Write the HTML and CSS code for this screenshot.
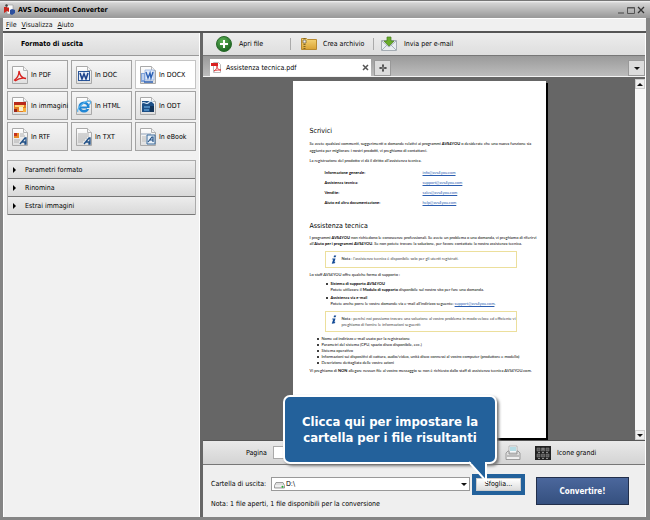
FILE: index.html
```html
<!DOCTYPE html>
<html lang="it">
<head>
<meta charset="utf-8">
<title>AVS Document Converter</title>
<link rel="stylesheet" href="styles.css">
</head>
<body>
<svg class="defs" aria-hidden="true">
  <defs>
    <linearGradient id="paper" x1="0" y1="0" x2="0" y2="1"><stop offset="0" stop-color="#fff"/><stop offset="1" stop-color="#dedede"/></linearGradient>
    <linearGradient id="gold" x1="0" y1="0" x2="0" y2="1"><stop offset="0" stop-color="#f6d678"/><stop offset="1" stop-color="#d9a233"/></linearGradient>
    <radialGradient id="green" cx=".4" cy=".3" r=".8"><stop offset="0" stop-color="#5fb457"/><stop offset="1" stop-color="#12591a"/></radialGradient>
    <symbol id="sheet" viewBox="0 0 16 18"><path d="M.5.5h11l4 4v13H.5z" fill="url(#paper)" stroke="#a9a9a9"/><path d="M11.500.5v4h4" fill="#f4f4f4" stroke="#b5b5b5"/></symbol>
  </defs>
</svg>
<div class="window">
  <header class="titlebar">
    <svg class="logo" viewBox="0 0 11 11"><path d="M3 1h6v9H3z" fill="#f8f8f8" stroke="#999" stroke-width=".6"/><path d="M0 3h3l1 1 1-1v5L3 7 0 9z" fill="#c9251c"/><path d="M1 1l2-1 1 2-2 1z" fill="#444"/><path d="M6 6l2-1 3 1v3l-3 2-2-1z" fill="#2b4f9e"/></svg>
    <h1>AVS Document Converter</h1>
    <div class="window-buttons">
      <button aria-label="Riduci"><svg viewBox="0 0 8 8"><path d="M1 7h6" stroke="#444" stroke-width="1"/></svg></button>
      <button aria-label="Ingrandisci"><svg viewBox="0 0 8 8"><path d="M.5 1.500h7v6h-7zM.5 2h7" fill="none" stroke="#555"/></svg></button>
      <button aria-label="Chiudi"><svg viewBox="0 0 8 8"><path d="M1 1l6 6M7 1L1 7" stroke="#333" stroke-width="1.300"/></svg></button>
    </div>
  </header>
  <nav class="menubar">
    <a href="#"><u>F</u>ile</a><a href="#"><u>V</u>isualizza</a><a href="#"><u>A</u>iuto</a>
  </nav>
  <div class="body">
    <aside class="sidebar">
      <h2>Formato di uscita</h2>
      <div class="formats">
        <button><svg viewBox="0 0 16 18"><use href="#sheet"/><path d="M2 14.500c3-2 5-5.500 5-9.500 1 5 4 7.500 7 7.500-4-.8-8 .2-11 2.500" fill="none" stroke="#d8201d" stroke-width="1.300"/></svg>In PDF</button>
        <button><svg viewBox="0 0 16 18"><use href="#sheet"/><path d="M2 5h12v10H2z" fill="#2a5699"/><path d="M3 14V6h10v8z" fill="#e6edf8"/><path d="M4 7l2 6 2-5 2 5 2-6" fill="none" stroke="#1d438c" stroke-width="1.600"/></svg>In DOC</button>
        <button class="selected"><svg viewBox="0 0 16 18"><use href="#sheet"/><path d="M1 7h4v9H1z" fill="#7fa3dc"/><path d="M2 9h2M2 11h2M2 13h2" stroke="#fff"/><path d="M5 4h9v10H5z" fill="#e2ebfa" stroke="#89a9dc" stroke-width=".7"/><path d="M6 6l2 6 2-5 1 5 2-6M4 16h9" fill="none" stroke="#2e62b5" stroke-width="1.400"/></svg>In DOCX</button>
        <button><svg viewBox="0 0 16 18"><use href="#sheet"/><path d="M2 5h12v10H2z" fill="#e27a22"/><path d="M2 5h12v3H2z" fill="#b8281a"/><path d="M3 8h9v2H3z" fill="#ffd977"/><path d="M7 10h4v4H7z" fill="#f9efcf"/><path d="M2 12h3v3H2z" fill="#9d2418"/><path d="M11 11h3v4h-3z" fill="#f5b13c"/></svg>In immagini</button>
        <button><svg viewBox="0 0 16 18"><use href="#sheet"/><circle cx="8" cy="10" r="4.300" fill="none" stroke="#2086d4" stroke-width="2.600"/><path d="M5 10.500h8" stroke="#2086d4" stroke-width="2"/><path d="M11 12h4v-1h-4z" fill="#eee"/><path d="M2 15C0 12 9 3 14 4c1 1 0 3-1 4" fill="none" stroke="#56b3ee" stroke-width="1.200"/></svg>In HTML</button>
        <button><svg viewBox="0 0 16 18"><use href="#sheet"/><path d="M2 4h9l3 3v8H2z" fill="#1d4f86"/><path d="M2 6c3-2 4 2 6 0s4-2 5-1" fill="none" stroke="#cfe2f4" stroke-width="1.200"/><path d="M4 10h8M4 13h5" stroke="#5b9bd0" stroke-width="1.300"/><path d="M10 9h4v6h-4z" fill="#123459"/></svg>In ODT</button>
        <button><svg viewBox="0 0 16 18"><use href="#sheet"/><path d="M2 5h5v5H2z" fill="#e88a2a"/><path d="M2 5h3v3H2z" fill="#c5321f"/><path d="M8 6h4M8 8h5M2 12h6M2 14h5" stroke="#b0b0b0"/><path d="M8 16l5-6h1v6h-1v-2h-3" fill="none" stroke="#1f4f86" stroke-width="1.300"/></svg>In RTF</button>
        <button><svg viewBox="0 0 16 18"><use href="#sheet"/><path d="M2 6h11M2 8h11M2 10h9M2 12h7M2 14h5" stroke="#b0b0b0"/><path d="M8 16l5-6h1v6h-1v-2h-3" fill="none" stroke="#1f4f86" stroke-width="1.300"/></svg>In TXT</button>
        <button><svg viewBox="0 0 16 18"><use href="#sheet"/><path d="M1 5h10v2H1z" fill="#c3ccd8"/><path d="M2 9h4M2 11h4M2 13h4" stroke="#bbb"/><path d="M7 7h8v9H7z" fill="#e8f0f8" stroke="#3b6a9b"/><path d="M8 14l4-5h1v5m-3-2h3" fill="none" stroke="#1f4f86" stroke-width="1.200"/></svg>In eBook</button>
      </div>
      <div class="accordion">
        <button>Parametri formato</button>
        <button>Rinomina</button>
        <button>Estrai immagini</button>
      </div>
    </aside>
    <main class="workspace">
      <div class="toolbar">
        <button class="open"><svg viewBox="0 0 16 16"><circle cx="8" cy="8" r="7.500" fill="url(#green)" stroke="#2c6b2c"/><path d="M8 4v8M4 8h8" stroke="#fff" stroke-width="2"/></svg>Apri file</button>
        <button class="archive"><svg viewBox="0 0 16 16"><path d="M.5 2.500h5l1 1h9v10h-15z" fill="url(#gold)" stroke="#b98a2e"/><path d="M3.500 2v12" stroke="#7d6425" stroke-width="2" stroke-dasharray="1 1"/><path d="M2 4h3v3H2z" fill="#eee" stroke="#6b5a30" stroke-width=".7"/></svg>Crea archivio</button>
        <button class="mail"><svg viewBox="0 0 16 16"><path d="M.5 4.500h15v10H.5z" fill="#e9edf0" stroke="#a4acb3"/><path d="M1 5l7 6 7-6M1 14l5-5M15 14l-5-5" fill="none" stroke="#a4b0bb"/><path d="M6 1h4v4h3l-5 5-5-5h3z" fill="#69ad2c" stroke="#467f1b" stroke-width=".7"/></svg>Invia per e-mail</button>
      </div>
      <div class="tabs">
        <div class="tab">
          <svg viewBox="0 0 11 11"><path d="M2.500.5h5l2 2v8h-7z" fill="#fff" stroke="#bbb"/><path d="M0 1h7v3H0z" fill="#d92020"/><path d="M3 9c2-1 3-3 3-5 0 3 2 4 4 4-3 0-5 0-7 1" fill="none" stroke="#d92020" stroke-width=".8"/></svg>
          <span>Assistenza tecnica.pdf</span>
          <button aria-label="Chiudi scheda"><svg viewBox="0 0 7 7"><path d="M1 1l5 5M6 1L1 6" stroke="#555" stroke-width="1.500"/></svg></button>
        </div>
        <button class="new-tab" aria-label="Nuova scheda"><svg viewBox="0 0 8 8"><path d="M4 .5v7M.5 4h7" stroke="#444" stroke-width="2"/><path d="M4 1.500v5M1.500 4h5" stroke="#bbb" stroke-width=".6"/></svg></button>
        <button class="tab-menu" aria-label="Elenco schede"><i class="arrow down"></i></button>
      </div>
      <div class="viewer">
        <div class="canvas">
          <article class="page">
            <h3>Scrivici</h3>
            <p class="loose">Se avete qualsiasi commenti, suggerimenti o domande relativi ai programmi <b>AVS4YOU</b> o desiderate che una nuova funzione sia<br>aggiunta per migliorare i nostri prodotti, vi preghiamo di contattarci.</p>
            <p class="loose">La registrazione del prodotto vi dà il diritto all'assistenza tecnica.</p>
            <table>
              <tr><th>Informazione generale:</th><td><a href="#">info@avs4you.com</a></td></tr>
              <tr><th>Assistenza tecnica:</th><td><a href="#">support@avs4you.com</a></td></tr>
              <tr><th>Vendite:</th><td><a href="#">sales@avs4you.com</a></td></tr>
              <tr><th>Aiuto ed altra documentazione:</th><td><a href="#">help@avs4you.com</a></td></tr>
            </table>
            <h3 class="second">Assistenza tecnica</h3>
            <p>I programmi <b>AVS4YOU</b> non richiedono le conoscenze professionali. Se avete un problema o una domanda, vi preghiamo di riferirvi<br>all'<b>Aiuto per i programmi AVS4YOU</b>. Se non potete trovare la soluzione, per favore contattate la nostra assistenza tecnica.</p>
            <div class="note"><svg viewBox="0 0 8 11"><path d="M4 0h3L6 2.500H3.500zM2 4h4L4.500 9 6 8.500 5 10.500 1 11l2-6-2 .5z" fill="#124a96"/></svg><p><b>Nota</b> : l'assistenza tecnica è disponibile solo per gli utenti registrati.</p></div>
            <p>Lo staff AVS4YOU offre qualche forma di supporto :</p>
            <ul class="support">
              <li><b>Sistema di supporto AVS4YOU</b><br>Potete utilizzare il <b>Modulo di supporto</b> disponibile sul nostro sito per fare una domanda.</li>
              <li><b>Assistenza via e-mail</b><br>Potete anche porre le vostre domande via e-mail all'indirizzo seguente: <a href="#">support@avs4you.com</a>.</li>
            </ul>
            <div class="note"><svg viewBox="0 0 8 11"><path d="M4 0h3L6 2.500H3.500zM2 4h4L4.500 9 6 8.500 5 10.500 1 11l2-6-2 .5z" fill="#124a96"/></svg><p><b>Nota</b> : perché noi possiamo trovare una soluzione al vostro problema in modo veloce ed efficiente vi<br>preghiamo di fornire le informazioni seguenti:</p></div>
            <ul class="details">
              <li>Nome ed indirizzo e-mail usato per la registrazione</li>
              <li>Parametri del sistema (CPU, spazio disco disponibile, ecc.)</li>
              <li>Sistema operativo</li>
              <li>Informazioni sui dispositivi di cattura, audio/video, unità disco connessi al vostro computer (produttore e modello)</li>
              <li>Descrizione dettagliata delle vostre azioni</li>
            </ul>
            <p>Vi preghiamo di <b>NON</b> allegare nessun file al vostro messaggio se non è richiesto dallo staff di assistenza tecnica AVS4YOU.com.</p>
          </article>
        </div>
        <div class="scrollbar"><button aria-label="Su"><i class="arrow up"></i></button><button aria-label="Giù"><i class="arrow down"></i></button></div>
      </div>
      <div class="pagebar">
        <label for="pagina">Pagina</label><input id="pagina" type="text">
        <button class="print" aria-label="Stampa"><svg viewBox="0 0 16 16"><path d="M4 1h8v7H4z" fill="#f4f8fa" stroke="#aaa" stroke-width=".8"/><path d="M5 2h6v4H5z" fill="#b5dce4"/><path d="M1 8l2-2h1v3h8V6h1l2 2v6.500H1z" fill="#dedede" stroke="#8d8d8d" stroke-width=".8"/><path d="M2 11h12" stroke="#999"/><path d="M2 13h12" stroke="#fff"/></svg></button>
        <button class="icons"><svg viewBox="0 0 16 14"><path d="M0 0h16v14H0z" fill="#222"/><path d="M2 2h3v3H2zM6.500 2h3v3h-3zM11 2h3v3h-3zM2 8h3v3H2zM6.500 8h3v3h-3zM11 8h3v3h-3z" fill="#555" stroke="#888" stroke-width=".5"/><path d="M7 3h2M3 6.500h2M7 6.500h2M11 6.500h2M3 12.500h2M7 12.500h2M11 12.500h2" stroke="#aaa" stroke-width=".8"/></svg>Icone grandi</button>
      </div>
      <footer class="output">
        <div class="fields">
          <div class="row">
            <label for="cartella">Cartella di uscita:</label>
            <span class="combo"><select id="cartella"><option>D:\</option></select><svg class="drive" viewBox="0 0 11 7"><path d="M2 .5h7l1.500 3v2.500h-10V3.500z" fill="#ddd" stroke="#888" stroke-width=".8"/><path d="M1 4h9" stroke="#fff"/><circle cx="8.500" cy="4.700" r="1" fill="#22aa2c"/></svg><i class="arrow down"></i></span>
            <span class="highlight"><button class="browse">Sfoglia...</button>
              <span class="callout" role="tooltip">Clicca qui per impostare la cartella per i file risultanti<svg viewBox="0 0 22 22"><path d="M1 2l17 18V2z" fill="#23619b"/><path d="M1 1l17 19V1" fill="none" stroke="#fff" stroke-width="2"/><path d="M2 0h15v3H4z" fill="#23619b"/></svg></span>
            </span>
          </div>
          <p>Nota: 1 file aperti, 1 file disponibili per la conversione</p>
        </div>
        <button class="convert">Convertire!</button>
      </footer>
    </main>
  </div>
</div>
</body>
</html>
```
FILE: styles.css
```css
* { box-sizing: border-box; }
body {
  margin: 0;
  font: 7px/10px "DejaVu Sans Condensed", "DejaVu Sans", sans-serif;
  color: #000;
}
h1, h2, h3, p, ul { margin: 0; padding: 0; }
svg { display: block; flex: none; }
button {
  margin: 0; padding: 0; border: 0; background: none;
  font: inherit; color: inherit; white-space: nowrap;
}
.defs { position: absolute; width: 0; height: 0; }

.window {
  min-height: 100vh;
  display: flex; flex-direction: column;
  padding: 0 4px 3px 3px;
  background: #858585;
  border-top: 1px solid #777;
}
.titlebar {
  display: flex; align-items: center; gap: 3px;
  height: 17px; margin: 0 -4px 0 -3px; padding: 0 5px 0 4px;
  background: linear-gradient(#f4f4f4 0, #d3d3d3 2px, #9b9b9b 16px);
}
.logo { width: 11px; height: 11px; }
.titlebar h1 { flex: 1; font-size: 7px; }
.window-buttons { display: flex; gap: 2px; }
.window-buttons svg { width: 8px; height: 8px; }
.menubar {
  display: flex; gap: 5px; align-items: center;
  height: 13px; padding-left: 3px;
  background: #f0f0f0; border-top: 1px solid #fff;
}
.menubar a { color: #111; text-decoration: none; }
.body {
  flex: 1; display: grid; grid-template-columns: 197px 1fr; gap: 3px;
  border-top: 2px solid #555; background: #666;
}

.sidebar { background: #f1f1f1; border: solid #fff; border-width: 0 1px; }
.sidebar h2 {
  height: 23px; padding-left: 17px; line-height: 22px; font-size: 7px;
  background: linear-gradient(#ededed, #dcdcdc); border-bottom: 1px solid #999;
}
.formats {
  display: grid; grid-template-columns: repeat(3, minmax(0, 1fr)); gap: 2px 3px;
  padding: 4px 3px 0;
}
.formats button {
  display: flex; align-items: center; gap: 3px;
  height: 29px; padding-left: 4px;
  border: 1px solid #a3a3a3; background: linear-gradient(#f5f5f5, #e2e2e2);
}
.formats .selected { background: #fff; border-color: #c4c4c4; }
.formats svg { width: 16px; height: 18px; }
.accordion { margin: 9px 3px 0; border: 1px solid #aaa; border-bottom: 0; }
.accordion button {
  display: flex; align-items: center; width: 100%; height: 18px; padding-left: 5px;
  background: linear-gradient(#ededed, #d9d9d9); border-bottom: 1px solid #777;
}
.accordion button::before {
  content: ""; margin-right: 9px;
  border: 3px solid transparent; border-left: 3px solid #000; border-right: 0;
}

.workspace { display: flex; flex-direction: column; min-width: 0; background: #efefef; border-right: 1px solid #fff; }
.toolbar {
  display: flex; align-items: center; height: 23px; padding-left: 13px;
  background: linear-gradient(#ededed, #dedede); border-bottom: 1px solid #777;
}
.toolbar button { display: flex; align-items: center; gap: 7px; height: 12px; }
.toolbar svg { width: 16px; height: 16px; }
.toolbar .open { width: 74px; }
.toolbar .archive { width: 83px; padding-left: 10px; gap: 6px; border-left: 1px solid #aaa; }
.toolbar .mail { padding-left: 7px; border-left: 1px solid #aaa; }

.tabs {
  display: flex; align-items: flex-end; gap: 3px; height: 21px; padding-left: 7px;
  background: linear-gradient(#9a9a9a, #bdbdbd); border-bottom: 1px solid #f3f3f3;
}
.tab { display: flex; align-items: center; width: 161px; height: 17px; padding: 0 2px 0 1px; gap: 4px; background: #fff; }
.tab > svg { width: 11px; height: 11px; }
.tab span { flex: 1; }
.tab button svg { width: 7px; height: 7px; }
.new-tab, .tab-menu { width: 17px; height: 16px; border: 1px solid #999; background: #dcdcdc; display: flex; align-items: center; justify-content: center; }
.new-tab svg { width: 8px; height: 8px; }
.tab-menu { margin-left: auto; }
.arrow { width: 0; height: 0; border: 3px solid transparent; }
.arrow.down { border-top-color: #111; border-bottom: 0; }
.arrow.up { border-bottom-color: #111; border-top: 0; }

.viewer { flex: 1; display: flex; border-top: 2px solid #666; }
.canvas {
  flex: 1; display: flex; justify-content: center; padding: 2px 0;
  background: #666;
}
.scrollbar { display: flex; flex-direction: column; justify-content: space-between; width: 10px; background: #f8f8f8; }
.scrollbar button { display: flex; align-items: center; justify-content: center; height: 10px; border: 1px solid #ccc; background: #eee; }

.page {
  width: 253px; padding: 45px 0 0 17px; overflow: hidden;
  background: #fff; box-shadow: 2px 2px #000;
  font: 4px/6px Lato, Roboto, sans-serif; white-space: nowrap;
}
.page h3 {
  margin-bottom: 4px;
  font: 7px/10px "DejaVu Sans Condensed", "DejaVu Sans", sans-serif;
}
.page .second { margin-top: 13px; }
.page .loose { line-height: 7px; margin-bottom: 3px; }
.page table { border-collapse: collapse; margin: 4px 0 0 15px; }
.page th, .page td { height: 10px; padding: 0; text-align: left; line-height: 6px; }
.page th { width: 98px; }
.page a { color: #2a5db0; }
.note {
  display: flex; align-items: flex-start; gap: 5px;
  width: 192px; margin: 4px 0 4px 15px; padding: 3px 5px;
  border: 1px solid #ecdf9c; color: #444;
  font-family: "Liberation Sans Narrow", Lato, sans-serif;
}
.note svg { width: 6px; height: 9px; }
.note p { padding-top: 1px; }
.support { margin: 3px 0 0 21px; }
.support li + li { margin-top: 2px; }
.page li { display: block; position: relative; }
.page li::before {
  content: ""; position: absolute; left: -5px; top: 2px;
  width: 2px; height: 2px; border-radius: 1px; background: #000;
}
.details { margin: 3px 0 2px 12px; }

.pagebar {
  display: flex; align-items: center; height: 25px; padding-left: 43px;
  background: linear-gradient(#e9e9e9, #d4d4d4); border-top: 1px solid #555; border-bottom: 1px solid #777;
}
.pagebar label { width: 27px; }
.pagebar input { width: 40px; height: 13px; border: 1px solid #aaa; font: inherit; }
.pagebar svg { width: 16px; height: 16px; }
.pagebar .print { margin-left: 192px; }
.pagebar .icons { display: flex; align-items: center; gap: 6px; margin-left: 14px; }
.pagebar .icons svg { height: 14px; }

.output { display: flex; align-items: center; gap: 11px; height: 52px; padding: 0 16px 0 8px; }
.fields { flex: 1; display: flex; flex-direction: column; gap: 4px; }
.row { display: flex; align-items: center; }
.row label { width: 60px; white-space: nowrap; }
.combo { flex: 1; position: relative; margin-right: 2px; }
.combo select {
  display: block; width: 100%; height: 14px; padding: 0 0 0 14px;
  appearance: none; border: 1px solid #999; border-radius: 0; background: #fff; font: inherit; color: inherit;
}
.combo .drive { position: absolute; left: 3px; top: 5px; width: 11px; height: 7px; }
.combo .arrow { position: absolute; right: 3px; top: 6px; }
.highlight { position: relative; padding: 4px; background: #23619b; }
.browse { display: block; width: 45px; height: 13px; background: linear-gradient(#fff, #ddd); border: 1px solid #ccc; }
.callout {
  position: absolute; right: 28px; bottom: 31px; width: 214px; height: 69px;
  padding: 17px 0; border: 2px solid #fff; border-radius: 7px;
  background: #23619b; color: #fff; box-shadow: 2px 2px 3px #777;
  font: bold 13px/16px "DejaVu Sans Condensed", "DejaVu Sans", sans-serif; text-align: center;
}
.callout svg { position: absolute; right: 5px; bottom: -21px; width: 22px; height: 22px; }
.convert {
  width: 93px; height: 28px; border: 1px solid #222f4b;
  background: linear-gradient(#4b679c, #35507f); color: #fff;
  font: bold 8px "DejaVu Sans Condensed", sans-serif;
}
```
